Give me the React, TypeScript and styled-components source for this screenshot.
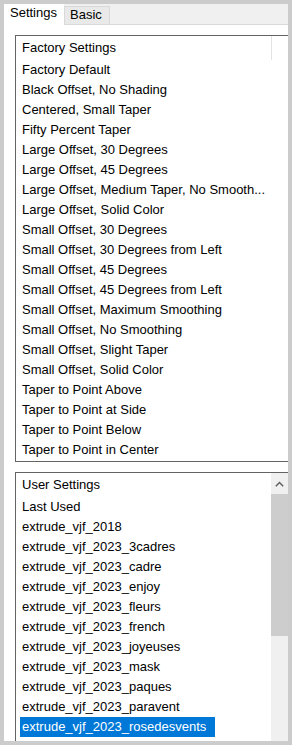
import React from "react";
import styled, { createGlobalStyle } from "styled-components";

const GlobalStyle = createGlobalStyle`
  html, body {
    margin: 0;
    padding: 0;
    background: #cccccc;
  }
  body {
    font-family: "Liberation Sans", Arial, sans-serif;
    font-size: 13px;
    color: #000;
  }
`;

const Frame = styled.div`
  width: 292px;
  height: 745px;
  box-sizing: border-box;
  padding: 4px;
  background: #cccccc;
  display: flex;
  flex-direction: column;
`;

const TabStrip = styled.div`
  height: 20px;
  flex: none;
  display: flex;
  align-items: flex-end;
  background: #f0f0f0;
  border-bottom: 1px solid #d9d9d9;
`;

const Tab = styled.div<{ $active?: boolean }>`
  box-sizing: border-box;
  height: ${(p) => (p.$active ? "21px" : "18px")};
  margin-bottom: ${(p) => (p.$active ? "-1px" : "0")};
  padding: ${(p) => (p.$active ? "1px 6px 0 6px" : "0 5px 0 5px")};
  width: ${(p) => (p.$active ? "60px" : "46px")};
  background: ${(p) => (p.$active ? "#ffffff" : "#e9e9e9")};
  border: ${(p) => (p.$active ? "none" : "1px solid #d9d9d9")};
  border-bottom: none;
  line-height: 15px;
  white-space: nowrap;
`;

const Content = styled.div`
  flex: 1;
  min-height: 0;
  background: #ffffff;
  overflow: hidden;
  padding: 10px 0 0 11px;
`;

const ListBox = styled.div<{ $height: number; $gap?: number }>`
  box-sizing: border-box;
  width: 274px;
  height: ${(p) => p.$height}px;
  margin-bottom: ${(p) => p.$gap ?? 0}px;
  border: 1px solid #646464;
  background: #fff;
  display: flex;
  overflow: hidden;
`;

const ListMain = styled.div`
  flex: 1;
  min-width: 0;
  display: flex;
  flex-direction: column;
`;

const HeaderRow = styled.div`
  display: flex;
  height: 24px;
  flex: none;
`;

const HeaderCell = styled.div<{ $divider?: boolean }>`
  box-sizing: border-box;
  width: 256px;
  height: 24px;
  padding-left: 6px;
  line-height: 24px;
  border-right: ${(p) => (p.$divider ? "1px solid #e3e3e3" : "none")};
  white-space: nowrap;
`;

const Item = styled.div`
  height: 20px;
  line-height: 20px;
  padding-left: 4px;
  white-space: nowrap;
`;

const ItemLabel = styled.span<{ $selected?: boolean }>`
  display: inline-block;
  height: 20px;
  padding: ${(p) => (p.$selected ? "0 9px 0 2px" : "0 2px")};
  background: ${(p) => (p.$selected ? "#0078d7" : "transparent")};
  color: ${(p) => (p.$selected ? "#ffffff" : "#000000")};
`;

const ScrollBar = styled.div`
  width: 17px;
  flex: none;
  display: flex;
  flex-direction: column;
  background: #f0f0f0;
`;

const ScrollButton = styled.div`
  height: 21px;
  flex: none;
  display: flex;
  align-items: center;
  justify-content: center;
  background: #f0f0f0;
`;

const ScrollThumb = styled.div`
  height: 142px;
  flex: none;
  background: #cdcdcd;
`;

const ScrollTrack = styled.div`
  flex: 1;
  background: #f0f0f0;
`;

const factory = [
  "Factory Default",
  "Black Offset, No Shading",
  "Centered, Small Taper",
  "Fifty Percent Taper",
  "Large Offset, 30 Degrees",
  "Large Offset, 45 Degrees",
  "Large Offset, Medium Taper, No Smooth...",
  "Large Offset, Solid Color",
  "Small Offset, 30 Degrees",
  "Small Offset, 30 Degrees from Left",
  "Small Offset, 45 Degrees",
  "Small Offset, 45 Degrees from Left",
  "Small Offset, Maximum Smoothing",
  "Small Offset, No Smoothing",
  "Small Offset, Slight Taper",
  "Small Offset, Solid Color",
  "Taper to Point Above",
  "Taper to Point at Side",
  "Taper to Point Below",
  "Taper to Point in Center",
];

const user = [
  "Last Used",
  "extrude_vjf_2018",
  "extrude_vjf_2023_3cadres",
  "extrude_vjf_2023_cadre",
  "extrude_vjf_2023_enjoy",
  "extrude_vjf_2023_fleurs",
  "extrude_vjf_2023_french",
  "extrude_vjf_2023_joyeuses",
  "extrude_vjf_2023_mask",
  "extrude_vjf_2023_paques",
  "extrude_vjf_2023_paravent",
  "extrude_vjf_2023_rosedesvents",
];

const ChevronUp = () => (
  <svg width="9" height="6" viewBox="0 0 9 6">
    <path d="M0.8 5.2 L4.5 1.5 L8.2 5.2" fill="none" stroke="#606060" strokeWidth="1.5" />
  </svg>
);

export default function App() {
  const selected = "extrude_vjf_2023_rosedesvents";
  return (
    <>
      <GlobalStyle />
      <Frame>
        <TabStrip>
          <Tab $active>Settings</Tab>
          <Tab>Basic</Tab>
        </TabStrip>
        <Content>
          <ListBox $height={427} $gap={10}>
            <ListMain>
              <HeaderRow>
                <HeaderCell $divider>Factory Settings</HeaderCell>
              </HeaderRow>
              {factory.map((f) => (
                <Item key={f}>
                  <ItemLabel>{f}</ItemLabel>
                </Item>
              ))}
            </ListMain>
          </ListBox>
          <ListBox $height={300}>
            <ListMain>
              <HeaderRow>
                <HeaderCell>User Settings</HeaderCell>
              </HeaderRow>
              {user.map((u) => (
                <Item key={u}>
                  <ItemLabel $selected={u === selected}>{u}</ItemLabel>
                </Item>
              ))}
            </ListMain>
            <ScrollBar>
              <ScrollButton>
                <ChevronUp />
              </ScrollButton>
              <ScrollThumb />
              <ScrollTrack />
            </ScrollBar>
          </ListBox>
        </Content>
      </Frame>
    </>
  );
}
